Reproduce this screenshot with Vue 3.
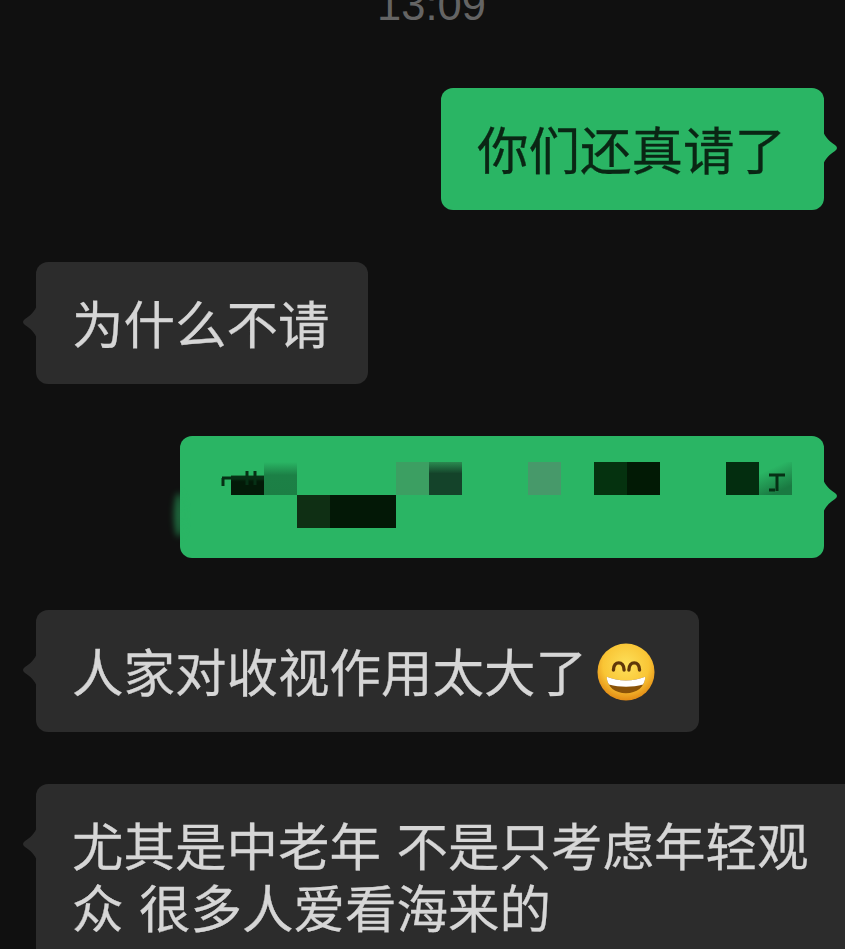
<script setup>
const mosaic = [
  { col: 1, row: 1, span: 1, bg: 'linear-gradient(transparent 40%, #0a3a18 42%, #031a08 60%)' },
  { col: 2, row: 1, span: 1, bg: 'linear-gradient(#2ab564 0, #1c8046 40%, #1c7f45)' },
  { col: 6, row: 1, span: 1, bg: '#3c9f62' },
  { col: 7, row: 1, span: 1, bg: 'linear-gradient(#2a8a50 0, #14432a 35%)' },
  { col: 10, row: 1, span: 1, bg: '#47996a' },
  { col: 12, row: 1, span: 1, bg: '#05320f' },
  { col: 13, row: 1, span: 1, bg: '#021a05' },
  { col: 16, row: 1, span: 1, bg: '#032d0f' },
  { col: 17, row: 1, span: 1, bg: 'linear-gradient(155deg, #2ab564 25%, #1a7a42 80%)' },
  { col: 3, row: 2, span: 1, bg: '#0f2f14' },
  { col: 4, row: 2, span: 2, bg: '#031806' },
]
</script>

<template>
  <div class="page">
    <div class="time">13:09</div>

    <div class="row mine">
      <div class="bubble green">你们还真请了</div>
    </div>

    <div class="row">
      <div class="bubble gray">为什么不请</div>
    </div>

    <div class="row mine">
      <div class="bubble green hidden-msg">
        <div class="smudge"></div>
        <div class="mosaic">
          <div
            v-for="cell in mosaic"
            :key="cell.col + '-' + cell.row"
            :style="{ gridColumn: cell.col + ' / span ' + cell.span, gridRow: cell.row, background: cell.bg }"
          ></div>
        </div>
        <!-- bits of the covered text that stick out of the mosaic -->
        <svg class="residue" viewBox="0 0 644 122" aria-hidden="true">
          <path d="M42 42h42M43 42v8M67 35v14M75 35v14" stroke="#063015" stroke-width="3" fill="none" />
          <path d="M589 39h16M597 39v16M589 54h6" stroke="#063015" stroke-width="3" fill="none" />
        </svg>
      </div>
    </div>

    <div class="row">
      <div class="bubble gray">
        人家对收视作用太大了<svg class="emoji" viewBox="0 0 60 60" aria-hidden="true">
          <defs>
            <radialGradient id="face" cx="50%" cy="38%" r="62%">
              <stop offset="0" stop-color="#fde05a" />
              <stop offset="0.65" stop-color="#f9c535" />
              <stop offset="1" stop-color="#e28a14" />
            </radialGradient>
          </defs>
          <circle cx="30" cy="30" r="29.500" fill="url(#face)" />
          <path d="M17 28c0-10 11-10 11 0M33 28c0-10 11-10 11 0" fill="none" stroke="#5f370a" stroke-width="3.500" stroke-linecap="round" />
          <path d="M10 35c12 5 28 5 40 0-.5 11-9 17-20 17S10.500 46 10 35z" fill="#8a5208" />
          <path d="M10 35c12 5 28 5 40 0-.2 3-1 6-2.400 8-11 3-24 3-35.200 0C11 41 10.200 38 10 35z" fill="#fff" />
        </svg>
      </div>
    </div>

    <div class="row">
      <div class="bubble gray wide">
        <div>尤其是中老年 不是只考虑年轻观</div>
        <div>众 很多人爱看海来的</div>
      </div>
    </div>
  </div>
</template>

<style scoped>
.page {
  width: 845px;
  height: 949px;
  overflow: hidden;
  background: #101010;
  padding: 0 21px 0 36px;
  box-sizing: border-box;
  display: flex;
  flex-direction: column;
  gap: 52px;
  font-family: "Noto Sans CJK SC", "Noto Sans", sans-serif;
}

.time {
  height: 36px;
  margin-top: -12px;
  margin-bottom: 12px;
  padding-left: 3px;
  line-height: 34px;
  text-align: center;
  font-family: "Liberation Sans", sans-serif;
  font-size: 43.500px;
  color: #646464;
  flex-shrink: 0;
}

.row {
  display: flex;
  flex-shrink: 0;
}

.row.mine {
  justify-content: flex-end;
}

.bubble {
  position: relative;
  height: 122px;
  box-sizing: border-box;
  padding: 29px 38px 31px 36px;
  border-radius: 12px;
  font-size: 51.500px;
  line-height: 62px;
  word-spacing: 4px;
  white-space: nowrap;
  -webkit-text-stroke: 0.3px currentColor;
}

.bubble::after {
  content: "";
  position: absolute;
  top: 43px;
  width: 16px;
  height: 34px;
  background: inherit;
  clip-path: path("M0 0C2 6 6 10 12 14Q16 17 12 20C6 24 2 28 0 34Z");
}

.green {
  background: #2ab564;
  color: #0a2614;
}

.green::after {
  right: -15px;
}

.gray {
  background: #2c2c2c;
  color: #d6d6d6;
}

.gray::after {
  left: -15px;
  transform: scaleX(-1);
}

.hidden-msg {
  width: 644px;
}

.smudge {
  position: absolute;
  left: -6px;
  top: 57px;
  width: 10px;
  height: 44px;
  border-radius: 50%;
  background: #2ab564;
  filter: blur(3px);
  opacity: 0.55;
}

.mosaic {
  position: absolute;
  left: 51px;
  top: 26px;
  display: grid;
  grid-template-columns: repeat(17, 33px);
  grid-template-rows: repeat(2, 33px);
}

.residue {
  position: absolute;
  inset: 0;
  width: 644px;
  height: 122px;
}

.emoji {
  width: 58px;
  height: 58px;
  margin: -16px 6px -4px 10px;
  vertical-align: middle;
}

.wide {
  width: 830px;
  height: 200px;
  flex-shrink: 0;
  padding-top: 29px;
}
</style>
